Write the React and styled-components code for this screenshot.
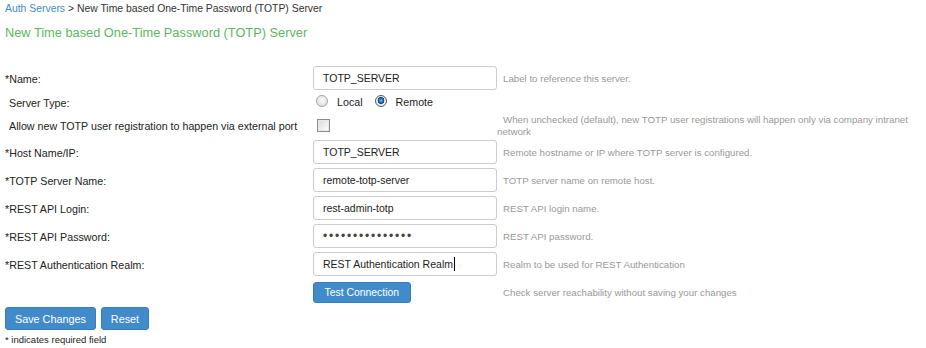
import React from 'react';
import styled, { createGlobalStyle } from 'styled-components';

const GlobalStyle = createGlobalStyle`
  html, body {
    margin: 0;
    padding: 0;
    background: #fff;
  }
  body {
    font-family: "Liberation Sans", Arial, sans-serif;
    color: #333;
  }
`;

// Form rows: label, control, hint
const fields = [
  { label: 'Host Name/IP:', value: 'TOTP_SERVER', hint: 'Remote hostname or IP where TOTP server is configured.' },
  { label: 'TOTP Server Name:', value: 'remote-totp-server', hint: 'TOTP server name on remote host.' },
  { label: 'REST API Login:', value: 'rest-admin-totp', hint: 'REST API login name.' },
  { label: 'REST API Password:', value: '•••••••••••••••', hint: 'REST API password.', masked: true },
  { label: 'REST Authentication Realm:', value: 'REST Authentication Realm', hint: 'Realm to be used for REST Authentication', focused: true },
];

const Page = styled.div`
  padding: 2px 5px 0;
`;

const Breadcrumb = styled.div`
  font-size: 10.4px;
  line-height: 14px;
  color: #333;
`;

const Crumb = styled.a`
  color: #428bca;
  text-decoration: none;
`;

const Title = styled.h1`
  margin: 8px 0 0;
  font-size: 12.8px;
  line-height: 18px;
  font-weight: normal;
  color: #5cb85c;
`;

const Form = styled.div`
  margin-top: 22px;
`;

const Row = styled.div`
  display: grid;
  grid-template-columns: 308px 184px 1fr;
  align-items: center;
  height: ${(p) => p.$h || 28}px;
`;

const Label = styled.div`
  font-size: 10.7px;
  color: #222;
  padding-left: ${(p) => (p.$indent ? 4 : 0)}px;
  padding-top: 1px;
`;

const Hint = styled.div`
  font-size: 9.7px;
  line-height: 12px;
  color: #999;
  text-indent: 6px;
  padding-top: ${(p) => (p.$wrap ? 2 : 1)}px;
`;

const Field = styled.div`
  box-sizing: border-box;
  width: 184px;
  height: 24px;
  border: 1px solid #ccc;
  border-radius: 3px;
  padding: 0 9px;
  display: flex;
  align-items: center;
  font-size: ${(p) => (p.$masked ? 12 : 10.5)}px;
  letter-spacing: ${(p) => (p.$masked ? '1.8px' : 'normal')};
  color: ${(p) => (p.$masked ? '#444' : '#222')};
  white-space: nowrap;
`;

const Caret = styled.span`
  display: inline-block;
  width: 1px;
  height: 14px;
  background: #000;
  margin-left: 1px;
`;

const RadioGroup = styled.div`
  display: flex;
  align-items: center;
  padding-left: 3px;
  font-size: 10.7px;
  color: #222;
`;

const RadioOption = styled.label`
  display: flex;
  align-items: center;
  gap: 9px;
  margin-right: 12px;
`;

const RadioDot = styled.span`
  box-sizing: border-box;
  width: 12px;
  height: 12px;
  border-radius: 50%;
  border: 1px solid ${(p) => (p.$checked ? '#555' : '#a5a5a5')};
  background: ${(p) =>
    p.$checked
      ? 'radial-gradient(circle at 50% 45%, #6fb8f0 0, #1f6cb0 2.2px, #0d3d6b 3.2px, #e8e8e8 3.6px, #fdfdfd 100%)'
      : 'radial-gradient(circle at 50% 40%, #fafafa 0, #e6e6e6 60%, #cfcfcf 100%)'};
  margin-top: -2px;
`;

const Checkbox = styled.span`
  box-sizing: border-box;
  display: block;
  width: 13px;
  height: 13px;
  margin-left: 4px;
  border: 1px solid #8c8c8c;
  background: linear-gradient(135deg, #d8d8d8 0%, #f4f4f4 70%, #fff 100%);
  box-shadow: inset 0 0 0 1px #e9e9e9;
`;

const Button = styled.button`
  font-family: "Liberation Sans", Arial, sans-serif;
  font-size: ${(p) => (p.$small ? 10.4 : 10.8)}px;
  color: #fff;
  background: #428bca;
  border: 1px solid #357ebd;
  border-radius: 3px;
  height: ${(p) => (p.$small ? 21 : 23)}px;
  padding: 0 ${(p) => (p.$small ? 10.5 : 9)}px;
  cursor: pointer;
`;

const Actions = styled.div`
  display: flex;
  gap: 5px;
  margin-top: 1px;
`;

const Note = styled.div`
  font-size: 9.5px;
  line-height: 12px;
  color: #222;
  margin-top: 4px;
`;

export default function App() {
  return (
    <>
      <GlobalStyle />
      <Page>
        <Breadcrumb>
          <Crumb href="#">Auth Servers</Crumb> &gt; New Time based One-Time Password (TOTP) Server
        </Breadcrumb>
        <Title>New Time based One-Time Password (TOTP) Server</Title>

        <Form>
          <Row>
            <Label>*Name:</Label>
            <Field>TOTP_SERVER</Field>
            <Hint>Label to reference this server.</Hint>
          </Row>
          <Row $h={20}>
            <Label $indent>Server Type:</Label>
            <RadioGroup>
              <RadioOption>
                <RadioDot />
                Local
              </RadioOption>
              <RadioOption>
                <RadioDot $checked />
                Remote
              </RadioOption>
            </RadioGroup>
            <div />
          </Row>
          <Row $h={26}>
            <Label $indent>Allow new TOTP user registration to happen via external port</Label>
            <div>
              <Checkbox />
            </div>
            <Hint $wrap>
              When unchecked (default), new TOTP user registrations will happen only via company intranet network
            </Hint>
          </Row>
          {fields.map((f) => (
            <Row key={f.label}>
              <Label>*{f.label}</Label>
              <Field $masked={f.masked}>
                {f.value}
                {f.focused && <Caret />}
              </Field>
              <Hint>{f.hint}</Hint>
            </Row>
          ))}
          <Row>
            <div />
            <div>
              <Button $small>Test Connection</Button>
            </div>
            <Hint>Check server reachability without saving your changes</Hint>
          </Row>
        </Form>

        <Actions>
          <Button>Save Changes</Button>
          <Button>Reset</Button>
        </Actions>
        <Note>* indicates required field</Note>
      </Page>
    </>
  );
}
